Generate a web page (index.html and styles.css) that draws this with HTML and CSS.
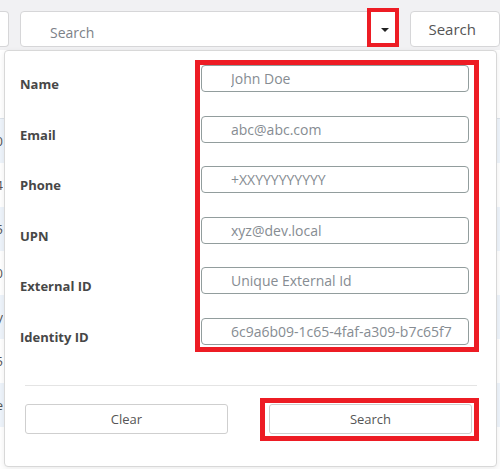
FILE: index.html
```html
<!DOCTYPE html>
<html lang="en">
<head>
  <meta charset="UTF-8">
  <meta name="viewport" content="width=device-width, initial-scale=1.0">
  <title>User Search</title>
  <link rel="stylesheet" href="styles.css">
</head>
<body>
  <div class="toolbar">
    <div class="side-box"></div>
    <div class="search-box">
      <input type="text" class="search-input" placeholder="Search">
      <span class="caret"></span>
      <span class="mark mark-caret"></span>
    </div>
    <button class="search-btn">Search</button>
  </div>

  <div class="grid">
    <div class="grid-head"></div>
    <div class="grid-row"><span class="cell">2020</span></div>
    <div class="grid-row"><span class="cell">2024</span></div>
    <div class="grid-row"><span class="cell">2025</span></div>
    <div class="grid-row"><span class="cell">2020</span></div>
    <div class="grid-row"><span class="cell">day</span></div>
    <div class="grid-row"><span class="cell">2025</span></div>
    <div class="grid-row"><span class="cell">one</span></div>
  </div>

  <div class="panel">
    <div class="form">
      <div class="labels">
        <label class="label">Name</label>
        <label class="label">Email</label>
        <label class="label">Phone</label>
        <label class="label">UPN</label>
        <label class="label">External ID</label>
        <label class="label">Identity ID</label>
      </div>
      <div class="fields">
        <input type="text" class="field" placeholder="John Doe">
        <input type="text" class="field" placeholder="abc@abc.com">
        <input type="text" class="field" placeholder="+XXYYYYYYYYY">
        <input type="text" class="field" placeholder="xyz@dev.local">
        <input type="text" class="field" placeholder="Unique External Id">
        <input type="text" class="field" placeholder="6c9a6b09-1c65-4faf-a309-b7c65f7">
      </div>
    </div>
    <div class="divider"></div>
    <div class="footer">
      <button class="btn">Clear</button>
      <div class="btn-mark">
        <button class="btn">Search</button>
      </div>
    </div>
  </div>
</body>
</html>
```

FILE: styles.css
```css
body {
  font-family: 'Open Sans', sans-serif;
  margin: 0;
  background: white;
  color: #444;
  position: relative;
  height: 469px;
  overflow: hidden;
}
.toolbar {
  display: flex;
  align-items: flex-start;
  height: 50px;
  padding-top: 11px;
  box-sizing: border-box;
  background: #f1f1f3;
}
.side-box {
  width: 9px;
  height: 36px;
  box-sizing: border-box;
  border: 1px solid #d6d6d8;
  border-left: none;
  border-radius: 0 4px 4px 0;
  background: white;
}
.search-box {
  position: relative;
  margin-left: 11px;
  width: 382px;
  height: 36px;
}
.search-input {
  width: 100%;
  height: 36px;
  box-sizing: border-box;
  border: 1px solid #d6d6d8;
  border-radius: 4px;
  padding: 6px 0 0 29px;
  font-family: 'Open Sans', sans-serif;
  font-size: 14px;
  outline: none;
}
.search-input::placeholder {
  color: #7d8288;
}
.caret {
  position: absolute;
  left: 361px;
  top: 17px;
  width: 0;
  height: 0;
  border-left: 4px solid transparent;
  border-right: 4px solid transparent;
  border-top: 4px solid #222;
}
.mark {
  position: absolute;
  border: 4px solid #ed1c24;
  box-sizing: border-box;
}
.mark-caret {
  right: 0;
  top: -3px;
  width: 32px;
  height: 39px;
}
.search-btn {
  margin-left: 11px;
  width: 90px;
  height: 36px;
  box-sizing: border-box;
  border: 1px solid #d6d6d8;
  border-radius: 4px;
  background: white;
  padding: 0 0 0 17px;
  text-align: left;
  font-family: 'Open Sans', sans-serif;
  font-size: 15px;
  color: #555;
}

/* table rows sitting under the dropdown */
.grid {
  background: white;
}
.grid-head {
  height: 68px;
  border-bottom: 1px solid #dde3ea;
}
.grid-row {
  height: 44px;
  overflow: hidden;
}
.grid-row:nth-child(even) {
  background: #eef4fb;
}
.cell {
  display: block;
  width: 3px;
  direction: rtl;
  overflow: hidden;
  white-space: nowrap;
  font-size: 13px;
  line-height: 44px;
  color: #555;
}

.panel {
  position: absolute;
  left: 4px;
  top: 50px;
  width: 493px;
  height: 417px;
  box-sizing: border-box;
  padding: 9px 17px 0 15px;
  border: 1px solid #d8d8d8;
  border-radius: 4px;
  background: white;
  box-shadow: 0 2px 6px rgba(0, 0, 0, 0.08);
}
.form {
  display: flex;
  align-items: flex-start;
}
.labels {
  width: 175px;
  padding-top: 11px;
  display: flex;
  flex-direction: column;
  gap: 23.5px;
}
.label {
  height: 27px;
  line-height: 27px;
  font-size: 13px;
  font-weight: 700;
  color: #474747;
}
.fields {
  width: 284px;
  box-sizing: border-box;
  border: 5px solid #ed1c24;
  padding: 0 5px 2px 1px;
  display: flex;
  flex-direction: column;
  gap: 23.5px;
}
.field {
  height: 27px;
  box-sizing: border-box;
  border: 1px solid #929d9d;
  border-radius: 4px;
  padding: 0 0 0 29px;
  font-family: 'Open Sans', sans-serif;
  font-size: 14px;
  outline: none;
}
.field::placeholder {
  color: #868c92;
}
.divider {
  height: 1px;
  margin: 33px 2px 0 5px;
  background: #e4e4e4;
}
.footer {
  display: flex;
  align-items: flex-start;
  margin-top: 18px;
  padding-left: 5px;
}
.btn {
  width: 203px;
  height: 30px;
  box-sizing: border-box;
  border: 1px solid #cfcfcf;
  border-radius: 3px;
  background: white;
  font-family: 'Open Sans', sans-serif;
  font-size: 13px;
  color: #555;
}
.btn-mark {
  margin: -6px 0 0 32px;
  border: 5px solid #ed1c24;
  padding: 1px 2px 2px 4px;
}
```
